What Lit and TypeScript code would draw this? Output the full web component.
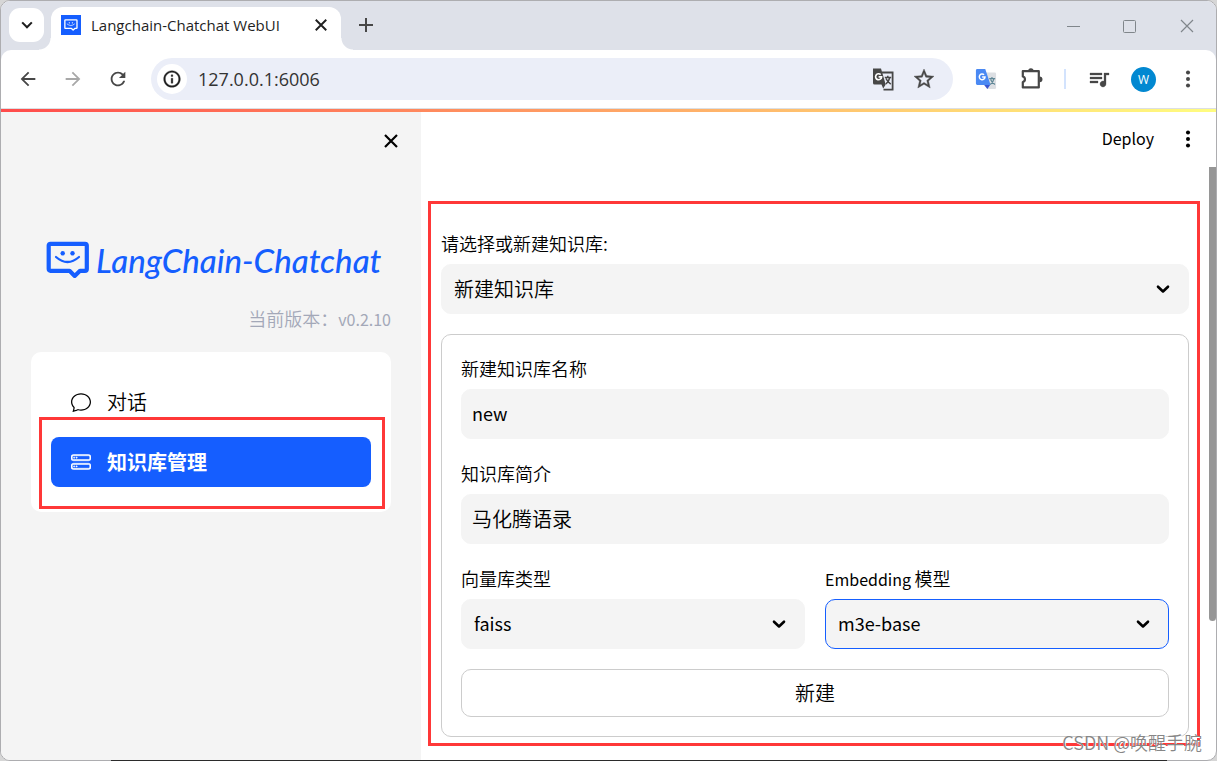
import { LitElement, html, css, svg, nothing } from "lit";
import { customElement, property, state } from "lit/decorators.js";
import { classMap } from "lit/directives/class-map.js";

/* ---------- icons ---------- */

const ICONS: Record<string, { box: string; body: unknown }> = {
  back: { box: "0 0 24 24", body: svg`<path d="M20 11H7.83l5.59-5.59L12 4l-8 8 8 8 1.41-1.41L7.83 13H20v-2z"/>` },
  forward: { box: "0 0 24 24", body: svg`<path d="M12 4l-1.41 1.41L16.17 11H4v2h12.17l-5.58 5.59L12 20l8-8z"/>` },
  reload: {
    box: "0 0 24 24",
    body: svg`<path d="M17.65 6.35C16.2 4.9 14.21 4 12 4c-4.42 0-7.99 3.58-7.99 8s3.57 8 7.99 8c3.73 0 6.84-2.55 7.73-6h-2.08c-.82 2.33-3.04 4-5.65 4-3.31 0-6-2.69-6-6s2.69-6 6-6c1.66 0 3.14.69 4.22 1.78L13 11h7V4l-2.35 2.35z"/>`,
  },
  info: {
    box: "0 0 24 24",
    body: svg`<path stroke="currentColor" stroke-width=".4" d="M11 7h2v2h-2zm0 4h2v6h-2zm1-9C6.48 2 2 6.48 2 12s4.48 10 10 10 10-4.48 10-10S17.52 2 12 2zm0 18c-4.41 0-8-3.59-8-8s3.59-8 8-8 8 3.59 8 8-3.59 8-8 8z"/>`,
  },
  star: {
    box: "0 0 24 24",
    body: svg`<path stroke="currentColor" stroke-width=".4" d="M22 9.24l-7.19-.62L12 2 9.19 8.63 2 9.24l5.46 4.73L5.82 21 12 17.27 18.18 21l-1.63-7.03L22 9.24zM12 15.4l-3.76 2.27 1-4.28-3.32-2.88 4.38-.38L12 6.1l1.71 4.04 4.38.38-3.32 2.88 1 4.28L12 15.4z"/>`,
  },
  playlist: {
    box: "0 0 24 24",
    body: svg`<path stroke="currentColor" stroke-width=".3" d="M15 6H3v2h12V6zm0 4H3v2h12v-2zM3 16h8v-2H3v2zM17 6v8.18c-.31-.11-.65-.18-1-.18-1.66 0-3 1.34-3 3s1.34 3 3 3 3-1.34 3-3V8h3V6h-5z"/>`,
  },
  extensions: {
    box: "0 0 24 24",
    body: svg`<path fill="none" stroke="currentColor" stroke-width="2.2" stroke-linejoin="round" d="M2.800 4.200h16V20.400h-16v-5.300a2.900 2.900 0 0 0 0-5.600z"/><path d="M8.200 4a2.700 2.700 0 0 1 5.400 0zM19.600 9.400a2.900 2.900 0 0 1 0 5.800z"/>`,
  },
  dots: {
    box: "0 0 24 24",
    body: svg`<circle cx="12" cy="5" r="2.200"/><circle cx="12" cy="12" r="2.200"/><circle cx="12" cy="19" r="2.200"/>`,
  },
  translate: {
    box: "0 0 24 24",
    body: svg`<path fill="none" stroke="currentColor" stroke-width="1.800" d="M11 5.500h10.600V22.600H12.500"/><path d="M2 1.500h8l4.700 16H3.500A1.500 1.500 0 0 1 2 16zM10.500 17.500h4.200l-2.500 4z"/><path fill="none" stroke="#fff" stroke-width="1.600" d="M9.700 7.600a3 3 0 1 0 .9 2.300H7.600"/><path fill="none" stroke="currentColor" stroke-width="1.500" d="M13.800 10.500h6.400M16.800 8.800v1.700M18.800 10.500c-.6 2.900-2 5-4 6.500M15 11.500c1 2.400 2.500 4.200 4.800 5.600"/>`,
  },
  gtranslate: {
    box: "0 0 24 24",
    body: svg`<path fill="#dcdfe3" d="M10 5h11.500A1.500 1.500 0 0 1 23 6.500v15a1.500 1.500 0 0 1-1.500 1.500H13z"/><path fill="#3a55d0" d="M10 18.500h6.500L13.500 23z"/><path fill="#4a89f3" d="M2.500 1h8.700l5.800 17.500H2.500A1.500 1.500 0 0 1 1 17V2.500A1.500 1.500 0 0 1 2.500 1z"/><path fill="none" stroke="#fff" stroke-width="1.600" d="M9.900 7.400a3.100 3.100 0 1 0 1 2.500H7.800"/><path fill="none" stroke="#5f8796" stroke-width="1.300" d="M15.500 11.500H22M18.500 9.800v1.700M20.700 11.500c-.6 2.900-2 5-4 6.500M17 12.500c1 2.400 2.500 4.200 4.800 5.600"/>`,
  },
  plus: { box: "0 0 24 24", body: svg`<path d="M19 13h-6v6h-2v-6H5v-2h6V5h2v6h6z"/>` },
  cross: { box: "0 0 16 16", body: svg`<path fill="none" stroke="currentColor" stroke-width="2.200" d="M2 2l12 12M14 2L2 14"/>` },
  thinCross: { box: "0 0 16 16", body: svg`<path fill="none" stroke="currentColor" stroke-width="1.200" d="M2 2l12 12M14 2L2 14"/>` },
  minimize: { box: "0 0 16 16", body: svg`<path d="M2 8h13v1H2z"/>` },
  maximize: { box: "0 0 16 16", body: svg`<rect x="1.500" y="2.500" width="12" height="12" rx="1" fill="none" stroke="currentColor"/>` },
  chevron: { box: "0 0 16 16", body: svg`<path fill="none" stroke="currentColor" stroke-width="2.600" stroke-linejoin="round" stroke-linecap="round" d="M3 5.700l5 4.800 5-4.800"/>` },
  tabChevron: { box: "0 0 16 16", body: svg`<path fill="none" stroke="currentColor" stroke-width="2.400" d="M2.500 5l5.500 5.500L13.500 5"/>` },
  chat: {
    box: "0 0 16 16",
    body: svg`<path d="M2.678 11.894a1 1 0 0 1 .287.801 10.97 10.97 0 0 1-.398 2c1.395-.323 2.247-.697 2.634-.893a1 1 0 0 1 .71-.074A8.060 8.060 0 0 0 8 14c3.996 0 7-2.807 7-6 0-3.192-3.004-6-7-6S1 4.808 1 8c0 1.468.617 2.830 1.678 3.894zm-.493 3.905a21.682 21.682 0 0 1-.713.129c-.2.032-.352-.176-.273-.362a9.680 9.680 0 0 0 .244-.637l.003-.010c.248-.720.450-1.548.524-2.319C.743 11.370 0 9.760 0 8c0-3.866 3.582-7 8-7s8 3.134 8 7-3.582 7-8 7a9.060 9.060 0 0 1-2.347-.306c-.520.263-1.639.742-3.468 1.105z"/>`,
  },
  stack: {
    box: "0 0 16 16",
    body: svg`<g stroke="currentColor" stroke-width=".4"><path d="M14 10a1 1 0 0 1 1 1v1a1 1 0 0 1-1 1H2a1 1 0 0 1-1-1v-1a1 1 0 0 1 1-1h12zM2 9a2 2 0 0 0-2 2v1a2 2 0 0 0 2 2h12a2 2 0 0 0 2-2v-1a2 2 0 0 0-2-2H2z"/><path d="M5 11.500a.5.5 0 1 1-1 0 .5.5 0 0 1 1 0zm-2 0a.5.5 0 1 1-1 0 .5.5 0 0 1 1 0zM14 3a1 1 0 0 1 1 1v1a1 1 0 0 1-1 1H2a1 1 0 0 1-1-1V4a1 1 0 0 1 1-1h12zM2 2a2 2 0 0 0-2 2v1a2 2 0 0 0 2 2h12a2 2 0 0 0 2-2V4a2 2 0 0 0-2-2H2z"/><path d="M5 4.500a.5.5 0 1 1-1 0 .5.5 0 0 1 1 0zm-2 0a.5.5 0 1 1-1 0 .5.5 0 0 1 1 0z"/></g>`,
  },
  bubble: {
    box: "0 0 44 38",
    body: svg`<path fill="none" stroke="currentColor" stroke-width="4.200" stroke-linejoin="round" d="M4.500 2.800h34.500q1.800 0 1.800 1.800v23.400q0 1.800-1.800 1.800h-5L28.700 34.900 23.500 29.800H4.500q-1.800 0-1.800-1.800V4.600q0-1.800 1.800-1.800z"/><circle cx="16.700" cy="12.300" r="2.200"/><circle cx="26.500" cy="12.300" r="2.200"/><path fill="none" stroke="currentColor" stroke-width="2.200" stroke-linecap="round" d="M10 16Q21.500 26 33 16"/>`,
  },
};

@customElement("ui-icon")
export class UiIcon extends LitElement {
  static styles = css`
    :host {
      display: block;
      flex: none;
      width: 24px;
      height: 24px;
    }
    svg {
      display: block;
      width: 100%;
      height: 100%;
      fill: currentColor;
    }
  `;
  @property() name = "";

  render() {
    const icon = ICONS[this.name];
    return icon ? html`<svg viewBox=${icon.box} aria-hidden="true">${icon.body}</svg>` : nothing;
  }
}

/* ---------- browser chrome ---------- */

@customElement("browser-bar")
export class BrowserBar extends LitElement {
  static styles = css`
    :host {
      display: block;
      background: #dee1e9;
      color: #474747;
      font-family: "Open Sans", "Noto Sans", sans-serif;
      font-weight: 400;
    }
    button {
      display: grid;
      place-items: center;
      flex: none;
      padding: 0;
      border: 0;
      background: none;
      color: inherit;
      font: inherit;
    }
    .strip {
      display: flex;
      height: 49px;
      padding-left: 8px;
    }
    .search {
      width: 35px;
      height: 34px;
      margin-top: 7px;
      border-radius: 11px;
      background: #fff;
      color: #1f1f1f;
    }
    .tab {
      position: relative;
      display: flex;
      align-items: center;
      box-sizing: border-box;
      width: 290px;
      margin: 6px 0 0 7px;
      padding: 0 13px 7px 10px;
      border-radius: 12px 12px 0 0;
      background: #fff;
      color: #1f1f1f;
    }
    .tab::before,
    .tab::after {
      content: "";
      position: absolute;
      bottom: 0;
      width: 12px;
      height: 12px;
    }
    .tab::before {
      right: 100%;
      background: radial-gradient(circle at 0 0, transparent 11px, #fff 12px);
    }
    .tab::after {
      left: 100%;
      background: radial-gradient(circle at 100% 0, transparent 11px, #fff 12px);
    }
    .favicon {
      display: grid;
      place-items: center;
      width: 20px;
      height: 20px;
      background: #155eff;
      color: #fff;
    }
    .title {
      flex: 1;
      margin-left: 10px;
      font-size: 15px;
      line-height: 20px;
      white-space: nowrap;
    }
    .i12 { width: 12px; height: 12px; }
    .i14 { width: 14px; height: 14px; }
    .i16 { width: 16px; height: 16px; }
    .i20 { width: 20px; height: 20px; }
    .i22 { width: 22px; height: 22px; }
    .new {
      margin: 0 0 1px 13px;
    }
    .window {
      display: flex;
      align-items: center;
      gap: 41px;
      margin-left: auto;
      padding-right: 21px;
      color: #80868b;
    }
    .toolbar {
      display: flex;
      align-items: center;
      height: 58px;
      border-bottom: 1px solid #dcdfe3;
      border-radius: 10px 10px 0 0;
      background: #fff;
    }
    .nav {
      display: flex;
      gap: 23px;
      padding: 0 22px 0 16px;
    }
    .off {
      color: #a8a8a8;
    }
    .address {
      display: flex;
      flex: 1;
      align-items: center;
      min-width: 0;
      height: 42px;
      padding: 0 17px 0 6px;
      border-radius: 21px;
      background: #ebeef8;
    }
    .site {
      width: 30px;
      height: 30px;
      border-radius: 50%;
      background: #fff;
      color: #1f1f1f;
    }
    .url {
      flex: 1;
      min-width: 0;
      margin: 0 10px 0 11px;
      padding: 0;
      border: 0;
      outline: 0;
      background: none;
      color: #333;
      font: 18px/24px "Open Sans", "Noto Sans", sans-serif;
    }
    .marks {
      display: flex;
      gap: 17px;
    }
    .tools {
      display: flex;
      align-items: center;
      padding: 0 17px 0 22px;
    }
    .puzzle {
      margin-left: 23px;
    }
    .rule {
      width: 2px;
      height: 20px;
      margin: 0 21px 0 20px;
      background: #d3e3fd;
    }
    .avatar {
      width: 25px;
      height: 25px;
      margin: 0 21px 0 20px;
      border-radius: 50%;
      background: #0288d1;
      color: #fff;
      font-size: 12px;
    }
  `;

  render() {
    return html`
      <div class="strip">
        <button class="search" aria-label="Search tabs"><ui-icon class="i14" name="tabChevron"></ui-icon></button>
        <div class="tab">
          <span class="favicon"><ui-icon class="i14" name="bubble"></ui-icon></span>
          <span class="title">Langchain-Chatchat WebUI</span>
          <button aria-label="Close tab"><ui-icon class="i14" name="cross"></ui-icon></button>
        </div>
        <button class="new" aria-label="New tab"><ui-icon name="plus"></ui-icon></button>
        <div class="window">
          <button aria-label="Minimize"><ui-icon class="i16" name="minimize"></ui-icon></button>
          <button aria-label="Maximize"><ui-icon class="i16" name="maximize"></ui-icon></button>
          <button aria-label="Close"><ui-icon class="i16" name="thinCross"></ui-icon></button>
        </div>
      </div>
      <div class="toolbar">
        <div class="nav">
          <button aria-label="Back"><ui-icon class="i22" name="back"></ui-icon></button>
          <button class="off" aria-label="Forward"><ui-icon class="i22" name="forward"></ui-icon></button>
          <button aria-label="Reload"><ui-icon class="i22" name="reload"></ui-icon></button>
        </div>
        <div class="address">
          <button class="site" aria-label="Site information"><ui-icon class="i20" name="info"></ui-icon></button>
          <input class="url" aria-label="Address" .value=${"127.0.0.1:6006"} />
          <div class="marks">
            <button aria-label="Translate"><ui-icon name="translate"></ui-icon></button>
            <button aria-label="Bookmark"><ui-icon name="star"></ui-icon></button>
          </div>
        </div>
        <div class="tools">
          <button aria-label="Google Translate"><ui-icon class="i22" name="gtranslate"></ui-icon></button>
          <button class="puzzle" aria-label="Extensions"><ui-icon name="extensions"></ui-icon></button>
          <span class="rule"></span>
          <button aria-label="Media"><ui-icon name="playlist"></ui-icon></button>
          <button class="avatar" aria-label="Profile">W</button>
          <button aria-label="Menu"><ui-icon class="i22" name="dots"></ui-icon></button>
        </div>
      </div>
    `;
  }
}

/* ---------- side bar ---------- */

const MENU = [
  { label: "对话", icon: "chat" },
  { label: "知识库管理", icon: "stack" },
];

@customElement("side-bar")
export class SideBar extends LitElement {
  static styles = css`
    :host {
      display: block;
      box-sizing: border-box;
      flex: none;
      width: 420px;
      padding: 21px 30px;
      background: #f4f4f4;
    }
    .close {
      display: block;
      margin: 0 -8px 0 auto;
      padding: 0;
      border: 0;
      background: none;
      color: #000;
    }
    .close ui-icon {
      width: 16px;
      height: 16px;
    }
    .logo {
      display: flex;
      align-items: center;
      gap: 6px;
      margin: 92px 0 0 15px;
      color: #155eff;
      font: italic 500 33px/38px Lato, sans-serif;
      white-space: nowrap;
    }
    .logo ui-icon {
      width: 44px;
      height: 38px;
    }
    .version {
      margin: 24px 0 19px;
      color: #a3a8b8;
      font-size: 18px;
      line-height: 30px;
      text-align: right;
    }
    .number {
      font-size: 16px;
      font-weight: 400;
      line-height: 1;
    }
    .menu {
      position: relative;
      display: grid;
      gap: 10px;
      padding: 25px 20px;
      border-radius: 10px;
      background: #fff;
    }
    .item {
      display: flex;
      align-items: center;
      gap: 16px;
      height: 50px;
      padding: 0 20px;
      border-radius: 8px;
      color: #000;
      font-size: 20px;
      text-decoration: none;
    }
    .item ui-icon {
      width: 20px;
      height: 20px;
    }
    .item span {
      padding-bottom: 2px;
    }
    .selected {
      background: #155eff;
      color: #fff;
      font-weight: 700;
    }
    .mark {
      position: absolute;
      inset: 65px 6px 3px 8px;
      border: 3px solid #ff3838;
      pointer-events: none;
    }
  `;

  @state() private current = 1;

  render() {
    return html`
      <button class="close" aria-label="Close sidebar"><ui-icon name="cross"></ui-icon></button>
      <div class="logo"><ui-icon name="bubble"></ui-icon><span>LangChain-Chatchat</span></div>
      <div class="version">当前版本：<span class="number">v0.2.10</span></div>
      <nav class="menu">
        ${MENU.map(
          (item, i) => html`
            <a href="#" class=${classMap({ item: true, selected: i === this.current })} @click=${() => (this.current = i)}>
              <ui-icon name=${item.icon}></ui-icon><span>${item.label}</span>
            </a>
          `
        )}
        <div class="mark"></div>
      </nav>
    `;
  }
}

/* ---------- knowledge base form ---------- */

@customElement("kb-form")
export class KbForm extends LitElement {
  static styles = css`
    :host {
      display: block;
      position: relative;
    }
    form {
      display: grid;
      gap: 20px;
      margin: 20px 0 0;
      padding: 19px;
      border: 1px solid #ccc;
      border-radius: 10px;
    }
    label {
      display: block;
      margin-bottom: 7px;
      font-size: 18px;
      line-height: 28px;
    }
    .latin {
      font-size: 16px;
      font-weight: 400;
      line-height: 1;
    }
    .box {
      display: grid;
      align-items: center;
    }
    .box > * {
      grid-area: 1 / 1;
    }
    select,
    input {
      appearance: none;
      box-sizing: border-box;
      width: 100%;
      min-width: 0;
      height: 50px;
      padding: 0 12px 2px;
      border: 1px solid #f4f4f4;
      border-radius: 10px;
      outline: 0;
      background: #f4f4f4;
      color: #000;
      font: inherit;
      font-size: 20px;
    }
    input {
      padding: 0 10px 2px;
    }
    .en {
      font-size: 18px;
      font-weight: 400;
    }
    .active {
      border-color: #155eff;
    }
    .arrow {
      justify-self: end;
      width: 16px;
      height: 16px;
      margin-right: 18px;
      pointer-events: none;
    }
    .pair {
      display: grid;
      grid-template-columns: 1fr 1fr;
      gap: 20px;
    }
    button {
      height: 48px;
      padding: 0 0 2px;
      border: 1px solid #ccc;
      border-radius: 10px;
      background: #fff;
      color: #000;
      font: inherit;
      font-size: 20px;
    }
    .mark {
      position: absolute;
      inset: -28px -11px -9px -13px;
      border: 3px solid #ff3838;
      pointer-events: none;
    }
  `;

  private picker(id: string, label: unknown, value: string, cls = "") {
    return html`
      <div>
        <label for=${id}>${label}</label>
        <div class="box">
          <select id=${id} class=${cls}><option>${value}</option></select>
          <ui-icon class="arrow" name="chevron"></ui-icon>
        </div>
      </div>
    `;
  }

  private textBox(id: string, label: string, value: string, cls = "") {
    return html`
      <div>
        <label for=${id}>${label}</label>
        <input id=${id} class=${cls} .value=${value} />
      </div>
    `;
  }

  render() {
    return html`
      ${this.picker("kb", "请选择或新建知识库:", "新建知识库")}
      <form @submit=${(e: Event) => e.preventDefault()}>
        ${this.textBox("name", "新建知识库名称", "new", "en")}
        ${this.textBox("info", "知识库简介", "马化腾语录")}
        <div class="pair">
          ${this.picker("store", "向量库类型", "faiss", "en")}
          ${this.picker("model", html`<span class="latin">Embedding </span>模型`, "m3e-base", "en active")}
        </div>
        <button>新建</button>
      </form>
      <div class="mark"></div>
    `;
  }
}

/* ---------- page ---------- */

@customElement("app-root")
export class AppRoot extends LitElement {
  static styles = css`
    :host {
      display: block;
      position: relative;
      height: 100vh;
      background: #d6d6d6;
      color: #000;
      font-family: "Noto Sans CJK SC", sans-serif;
      font-weight: 350;
    }
    /* dark edge of the desktop under the window */
    :host::after {
      content: "";
      position: absolute;
      right: 50px;
      bottom: 0;
      left: 111px;
      height: 1px;
      background: #2b2b2b;
    }
    .frame {
      position: relative;
      display: flex;
      flex-direction: column;
      box-sizing: border-box;
      height: 100%;
      border: 1px solid #adadb0;
      border-radius: 10px;
      overflow: hidden;
      background: #fff;
    }
    .stripe {
      flex: none;
      height: 3px;
      background: linear-gradient(90deg, #ff4b4b, #fffd80);
    }
    .body {
      display: flex;
      flex: 1;
      min-height: 0;
    }
    main {
      position: relative;
      flex: 1;
      min-width: 0;
      padding: 0 27px 0 20px;
    }
    header {
      display: flex;
      align-items: center;
      justify-content: flex-end;
      gap: 23px;
      height: 54px;
      margin: 0 -10px 63px 0;
    }
    header button {
      padding: 0;
      border: 0;
      background: none;
      color: #000;
      font: inherit;
      font-size: 16px;
      font-weight: 400;
    }
    .deploy {
      padding-bottom: 2px;
    }
    header ui-icon {
      width: 22px;
      height: 22px;
    }
    .thumb {
      position: absolute;
      top: 55px;
      right: 0;
      width: 7px;
      height: 70%;
      border-radius: 0 0 4px 4px;
      background: #969696;
    }
    .credit {
      position: absolute;
      right: 14px;
      bottom: 5px;
      color: #868686;
      font-size: 18px;
      line-height: 26px;
      text-shadow: 1px 1px 0 #fff;
    }
  `;

  render() {
    return html`
      <div class="frame">
        <browser-bar></browser-bar>
        <div class="stripe"></div>
        <div class="body">
          <side-bar></side-bar>
          <main>
            <header>
              <button class="deploy">Deploy</button>
              <button aria-label="Options"><ui-icon name="dots"></ui-icon></button>
            </header>
            <kb-form></kb-form>
            <div class="thumb"></div>
          </main>
        </div>
        <div class="credit">CSDN @唤醒手腕</div>
      </div>
    `;
  }
}
